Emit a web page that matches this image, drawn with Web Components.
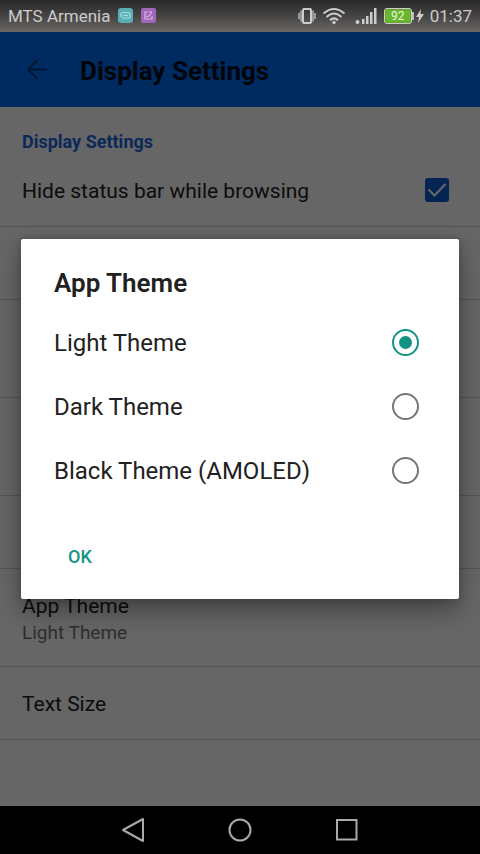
<!DOCTYPE html>
<html lang="en">
<head>
<meta charset="utf-8">
<meta name="viewport" content="width=device-width, initial-scale=1">
<title>Display Settings</title>
<style>
  body { margin: 0; font-family: Roboto, "Noto Sans", sans-serif; background: #000; }
</style>
</head>
<body>
<phone-screen>
  <status-bar slot="status" carrier="MTS Armenia" time="01:37" battery="92"></status-bar>
  <app-bar>Display Settings</app-bar>
  <settings-section heading="Display Settings">
    <setting-check>Hide status bar while browsing</setting-check>
    <setting-row></setting-row>
    <setting-row tall></setting-row>
    <setting-row tall></setting-row>
    <setting-row></setting-row>
    <setting-row tall>App Theme<span slot="summary">Light Theme</span></setting-row>
    <setting-row>Text Size</setting-row>
  </settings-section>
  <choice-dialog slot="dialog" heading="App Theme" action="OK">
    <choice-option value="light" checked>Light Theme</choice-option>
    <choice-option value="dark">Dark Theme</choice-option>
    <choice-option value="black">Black Theme (AMOLED)</choice-option>
  </choice-dialog>
  <nav-bar slot="nav"></nav-bar>
</phone-screen>

<script>
const define = (name, render, setup) => customElements.define(name, class extends HTMLElement {
  constructor() {
    super();
    this.attachShadow({ mode: 'open' });
  }
  connectedCallback() {
    const template = document.createElement('template');
    template.innerHTML = render(this);
    this.shadowRoot.replaceChildren(template.content.cloneNode(true));
    if (setup) setup(this);
  }
});

define('phone-screen', () => `
  <style>
    :host { display: flex; flex-direction: column; min-height: 100vh; }
    main { position: relative; flex: 1; background: #fff; }
    .scrim { position: absolute; inset: 0; display: flex; align-items: center; padding: 0 21px; background: rgba(0,0,0,.6); }
    .scrim ::slotted(*) { flex: 1; }
  </style>
  <slot name="status"></slot>
  <main>
    <slot></slot>
    <div class="scrim"><slot name="dialog"></slot></div>
  </main>
  <slot name="nav"></slot>`);

define('status-bar', el => `
  <style>
    :host { display: flex; align-items: center; height: 32px; padding: 0 8px; font-size: 17px; line-height: 20px; color: #ccc; background: linear-gradient(#282828, #464443 50%, #6a6765); }
    .group { display: flex; align-items: center; gap: 8px; }
    .end { margin-left: auto; gap: 6px; }
    svg { display: block; }
    .battery { display: flex; align-items: center; }
    .cell { box-sizing: border-box; width: 28px; height: 16px; border: 1px solid #ccc; outline: 1px solid #69a52e; outline-offset: -2px; border-radius: 3px; background: #69b52b; color: #eef5e6; font-size: 12px; line-height: 14px; text-align: center; }
    .tip { width: 2px; height: 8px; background: #bbb; margin-right: 2px; }
  </style>
  <div class="group">
    <span>${el.getAttribute('carrier')}</span>
    <svg width="15" height="16" viewBox="0 0 15 16"><rect width="15" height="15" rx="3" fill="#5aaeb5"/><path d="M3 9V6Q3 4.500 5 4.500H10Q12 4.500 12 6V10H4M5 8l3-1 2 1" fill="none" stroke="#a5e0e4" stroke-width="1.200"/></svg>
    <svg width="15" height="16" viewBox="0 0 15 16"><rect width="15" height="15" rx="2" fill="#a066b8"/><path d="M7 4H4v7h7V8M5 9l3-1 3-4M8 4h3" fill="none" stroke="#dbb5e8" stroke-width="1.200"/></svg>
  </div>
  <div class="group end">
    <svg width="18" height="18" viewBox="0 0 18 18" fill="none" stroke="#ccc"><rect x="5" y="2" width="8" height="14" rx="1" stroke-width="2"/><path d="M1 6v6M3 3.500v11M17 6v6M15 3.500v11" stroke-width="1.200"/></svg>
    <svg width="24" height="18" viewBox="0 0 24 18" fill="none" stroke="#ccc" stroke-width="2"><path d="M1.500 6.500Q12-2.500 22.500 6.500M4.500 10Q12 3 19.500 10M8 13.200Q12 9.500 16 13.200"/><circle cx="12" cy="15.500" r="1.700" fill="#ccc" stroke="none"/></svg>
    <svg width="26" height="18" viewBox="0 0 26 18" fill="#ccc"><circle cx="5.500" cy="15" r="2"/><path d="M10 12h2.500v5H10zM14 9h2.500v8H14zM18 5h2.500v12H18zM22 1h2.500v16H22z"/></svg>
    <div class="battery">
      <div class="cell">${el.getAttribute('battery')}</div><div class="tip"></div>
      <svg width="8" height="16" viewBox="0 0 8 16" fill="#ccc"><path d="M5 1 0 9h3L2 15 8 6H4.500z"/></svg>
    </div>
    <time>${el.getAttribute('time')}</time>
  </div>`);

define('app-bar', () => `
  <style>
    :host { display: flex; align-items: center; gap: 28px; height: 75px; padding: 0 24px; color: #000d20; background: #006cf0; }
    button { display: flex; padding: 0; border: 0; background: none; color: inherit; }
    h1 { margin: 0; padding-top: 2px; font-size: 26px; line-height: 32px; font-weight: 700; }
  </style>
  <button type="button" aria-label="Back"><svg width="28" height="28" viewBox="0 0 28 28" fill="none" stroke="#003a88" stroke-width="2.200"><path d="M23 13.500H4.500M13 4.500 4 13.500l9 9"/></svg></button>
  <h1><slot></slot></h1>`);

define('settings-section', el => `
  <style>
    :host { display: block; }
    h2 { margin: 0; padding: 23px 22px 0; font-size: 18px; line-height: 24px; font-weight: 700; color: #1a66de; }
  </style>
  <h2>${el.getAttribute('heading')}</h2>
  <slot></slot>`);

define('setting-row', () => `
  <style>
    :host { box-sizing: border-box; display: flex; flex-direction: column; justify-content: center; min-height: 73px; padding: 2px 22px 0; border-bottom: 1px solid #d8d8d8; font-size: 21px; line-height: 28px; color: #212121; }
    :host([tall]) { min-height: 98px; }
    .summary { font-size: 19px; line-height: 26px; color: #757575; }
  </style>
  <div><slot></slot></div>
  <div class="summary"><slot name="summary"></slot></div>`);

define('setting-check', () => `
  <style>
    :host { display: block; border-bottom: 1px solid #d8d8d8; font-size: 21px; line-height: 28px; color: #212121; }
    label { display: flex; align-items: center; justify-content: space-between; min-height: 72px; padding: 0 31px 0 22px; }
    .text { padding-top: 2px; }
    .box { display: grid; }
    .box > * { grid-area: 1 / 1; }
    input { appearance: none; width: 24px; height: 24px; margin: 0; border: 2px solid #757575; border-radius: 3px; }
    input:checked { border: 0; background: #0b5ed2; }
    svg { pointer-events: none; visibility: hidden; }
    input:checked + svg { visibility: visible; }
  </style>
  <label><span class="text"><slot></slot></span>
    <span class="box"><input type="checkbox" checked><svg width="24" height="24" viewBox="0 0 24 24" fill="none" stroke="#fff" stroke-width="2.200"><path d="M3.500 11.500 9.500 17.500 20.500 6"/></svg></span>
  </label>`);

define('choice-dialog', el => `
  <style>
    :host { display: block; border-radius: 2px; background: #fff; color: #212121; box-shadow: 0 12px 24px rgba(0,0,0,.34), 0 0 8px rgba(0,0,0,.2); }
    h2 { margin: 0; padding: 28px 33px 12px; font-size: 26px; line-height: 32px; font-weight: 600; }
    footer { padding: 30px 33px 18px; }
    button { display: block; height: 48px; padding: 0 14px; border: 0; background: none; font: 500 18px/24px Roboto, "Noto Sans", sans-serif; color: #149384; }
  </style>
  <section role="dialog" aria-labelledby="title">
    <h2 id="title">${el.getAttribute('heading')}</h2>
    <div role="radiogroup" aria-labelledby="title"><slot></slot></div>
    <footer><button type="button">${el.getAttribute('action')}</button></footer>
  </section>`, el => {
  el.addEventListener('change-choice', event => {
    for (const option of el.querySelectorAll('choice-option')) {
      option.shadowRoot.querySelector('input').checked = option === event.target;
    }
  });
});

define('choice-option', el => `
  <style>
    :host { display: block; font-size: 24px; line-height: 32px; }
    label { display: flex; align-items: center; justify-content: space-between; min-height: 64px; padding: 0 40px 0 33px; }
    input { appearance: none; box-sizing: border-box; width: 27px; height: 27px; margin: 0 0 2px; border: 2px solid #757575; border-radius: 50%; }
    input:checked { border-color: #149384; padding: 5px; background: #149384 content-box; }
  </style>
  <label><slot></slot><input type="radio" name="choice" value="${el.getAttribute('value')}" ${el.hasAttribute('checked') ? 'checked' : ''}></label>`, el => {
  el.shadowRoot.querySelector('input').addEventListener('change', () =>
    el.dispatchEvent(new CustomEvent('change-choice', { bubbles: true })));
});

define('nav-bar', () => `
  <style>
    :host { display: flex; justify-content: center; align-items: center; gap: 79px; height: 48px; background: #000; }
    button { display: flex; padding: 0; border: 0; background: none; }
    svg { fill: none; stroke: #aaa; stroke-width: 2; }
  </style>
  <button type="button" aria-label="Back"><svg width="28" height="28" viewBox="0 0 28 28"><path d="M24 3v22L4 14z" stroke-linejoin="round"/></svg></button>
  <button type="button" aria-label="Home"><svg width="28" height="28" viewBox="0 0 28 28"><circle cx="14" cy="14" r="10.500"/></svg></button>
  <button type="button" aria-label="Recent apps"><svg width="28" height="28" viewBox="0 0 28 28"><rect x="4" y="4" width="19.500" height="19.500"/></svg></button>`);
</script>
</body>
</html>
